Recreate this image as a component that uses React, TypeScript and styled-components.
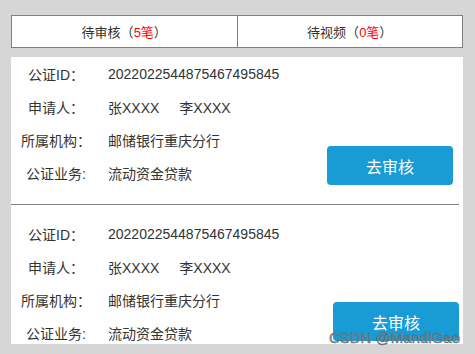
import React from 'react'
import styled, { createGlobalStyle } from 'styled-components'

const GlobalStyle = createGlobalStyle`
  html, body {
    margin: 0;
    padding: 0;
    background: #d6d6d6;
    font-family: "Liberation Sans", "Noto Sans CJK SC", sans-serif;
    color: #333;
  }
`

const Page = styled.div`
  position: relative;
  height: 354px;
  padding: 15px 12px 0 11px;
  box-sizing: border-box;
  overflow: hidden;
`

const TabBar = styled.div`
  display: flex;
  height: 33px;
  box-sizing: border-box;
  border: 1px solid #7f7f7f;
  background: #fff;
`

const Tab = styled.div`
  flex: 1;
  display: flex;
  align-items: center;
  justify-content: center;
  font-size: 13px;
  color: #333;
  & + & {
    border-left: 1px solid #7f7f7f;
  }
`

const Count = styled.span`
  color: #f00;
`

const Card = styled.div`
  margin-top: 9px;
  height: 287px;
  padding-right: 4px;
  background: #fff;
  overflow: hidden;
`

const Item = styled.div<{ $top: number; $divider?: boolean }>`
  display: flex;
  padding-top: ${({ $top }) => $top}px;
  padding-bottom: 15px;
  border-bottom: ${({ $divider }) => ($divider ? '1px solid #808080' : 'none')};
`

const Info = styled.div`
  flex: 1;
  display: grid;
  grid-template-columns: 90px 1fr;
  grid-auto-rows: 33px;
  column-gap: 7px;
  align-items: center;
  font-size: 14px;
`

const Label = styled.div`
  text-align: center;
  white-space: nowrap;
`

const Value = styled.div`
  display: flex;
  gap: 20px;
  white-space: nowrap;
`

const ReviewButton = styled.button<{ $bottom: number; $right: number }>`
  align-self: flex-end;
  width: 126px;
  height: 39px;
  margin-bottom: ${({ $bottom }) => $bottom}px;
  margin-right: ${({ $right }) => $right}px;
  border: none;
  border-radius: 4px;
  background: #199bd6;
  color: #fff;
  font-family: "Liberation Sans", "Noto Sans CJK SC", sans-serif;
  font-size: 16px;
  cursor: pointer;
`

const Watermark = styled.div`
  position: absolute;
  right: 15px;
  top: 329px;
  font-size: 15px;
  color: #8a8a8a;
  -webkit-text-stroke: 0.4px #5c5c5c;
  pointer-events: none;
`

const records = [
  { id: '2022022544875467495845', people: ['张XXXX', '李XXXX'], org: '邮储银行重庆分行', biz: '流动资金贷款' },
  { id: '2022022544875467495845', people: ['张XXXX', '李XXXX'], org: '邮储银行重庆分行', biz: '流动资金贷款' },
]

// the two cards sit a little differently in the scroll area
const layouts = [
  { top: 0, bottom: 4, right: 6, divider: true },
  { top: 12, bottom: 8, right: 0, divider: false },
]

export default function App() {
  return (
    <Page>
      <GlobalStyle />
      <TabBar>
        <Tab>
          待审核（<Count>5笔</Count>）
        </Tab>
        <Tab>
          待视频（<Count>0笔</Count>）
        </Tab>
      </TabBar>
      <Card>
        {records.map((r, i) => {
          const l = layouts[i]
          return (
            <Item key={i} $top={l.top} $divider={l.divider}>
              <Info>
                <Label>公证ID：</Label>
                <Value>{r.id}</Value>
                <Label>申请人：</Label>
                <Value>
                  {r.people.map((p) => (
                    <span key={p}>{p}</span>
                  ))}
                </Value>
                <Label>所属机构：</Label>
                <Value>{r.org}</Value>
                <Label>公证业务:</Label>
                <Value>{r.biz}</Value>
              </Info>
              <ReviewButton $bottom={l.bottom} $right={l.right}>
                去审核
              </ReviewButton>
            </Item>
          )
        })}
      </Card>
      <Watermark>CSDN @MandiGao</Watermark>
    </Page>
  )
}
